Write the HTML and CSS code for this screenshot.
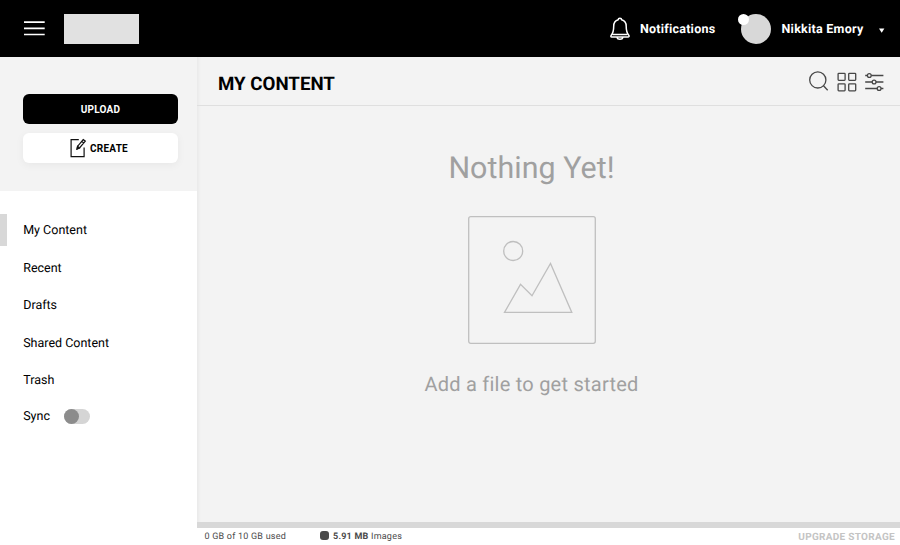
FILE: index.html
```html
<!DOCTYPE html>
<html lang="en">
<head>
<meta charset="utf-8">
<title>My Content</title>
<link rel="stylesheet" href="styles.css">
</head>
<body>
<div class="app">
  <header class="topbar">
    <svg class="menu-icon" width="21" height="16" viewBox="0 0 21 16" fill="none" stroke="#fff" stroke-width="1.7"><path d="M0 2.1H20.7M0 8.4H20.7M0 14.5H20.7"/></svg>
    <div class="logo"></div>
    <svg class="bell" width="20" height="24" viewBox="0 0 20 24" fill="none" stroke="#fff" stroke-width="1.5" stroke-linejoin="round"><path d="M8.2 2.8C8.2 .7 11.6 .7 11.6 2.8C14.8 3.6 16.2 6.1 16.2 9.3C16.2 14.8 16.8 16 18.6 18C19.5 19.1 19.2 20 18.2 20H1.7C.7 20 .5 19.1 1.4 18C3.1 16 3.7 14.8 3.7 9.3C3.7 6.1 5 3.6 8.2 2.8ZM2.6 17.4H17.3M7 20.4C7.6 23 12.3 23 12.9 20.4"/></svg>
    <span class="notifications">Notifications</span>
    <div class="avatar"><i class="badge"></i></div>
    <span class="user">Nikkita Emory</span>
    <svg class="caret" width="6" height="5" viewBox="0 0 6 5"><path d="M0 .5H5.4L2.7 4.7Z" fill="#fff"/></svg>
  </header>
  <div class="body">
    <aside class="sidebar">
      <div class="actions">
        <button class="btn upload">UPLOAD</button>
        <button class="btn create">
          <svg width="17" height="20" viewBox="0 0 17 20" fill="none" stroke="#111" stroke-width="1.2"><path d="M8.8 1.6H1.1V18.6H14.1V9.5"/><path d="M13.2 1.6L15.3 3.1L9.5 10L7 11.1L7.5 8.4ZM11.8 3.4L13.8 5"/><path d="M7.1 11L7.6 8.3L9.5 9.9Z" fill="#111"/></svg>
          <span>CREATE</span>
        </button>
      </div>
      <nav class="nav">
        <a class="item active">My Content</a>
        <a class="item">Recent</a>
        <a class="item">Drafts</a>
        <a class="item">Shared Content</a>
        <a class="item">Trash</a>
        <a class="item sync">Sync<span class="toggle"><i class="knob"></i></span></a>
      </nav>
    </aside>
    <main class="main">
      <div class="head">
        <h1>MY CONTENT</h1>
        <svg width="76" height="24" viewBox="0 0 76 24" fill="none" stroke="#474747" stroke-width="1.3"><circle cx="8.8" cy="10.9" r="8.1"/><path d="M14.5 16.8L18.7 21.2"/><rect x="29.1" y="4.3" width="7" height="7" rx=".7"/><rect x="39.7" y="4.3" width="7" height="7" rx=".7"/><rect x="29.1" y="14.8" width="7" height="7" rx=".7"/><rect x="39.7" y="14.8" width="7" height="7" rx=".7"/><path d="M56.2 6.5H58.4M62.2 6.5H74.4M56.2 13H63.2M67 13H74.4M56.2 19.5H68.2M72 19.5H74.4"/><circle cx="60.3" cy="6.5" r="1.9"/><circle cx="65.1" cy="13" r="1.9"/><circle cx="70.1" cy="19.5" r="1.9"/></svg>
      </div>
      <section class="empty">
        <h2>Nothing Yet!</h2>
        <svg width="128" height="128" viewBox="0 0 128 128" fill="none" stroke="#bfbfbf" stroke-width="1.3"><rect x=".7" y=".7" width="126.6" height="126.6" rx="2"/><circle cx="45.2" cy="35" r="9.5"/><path d="M36.5 96.4L52.5 68.4L64 79.8L82.5 47.5L103.8 96.4Z"/></svg>
        <p>Add a file to get started</p>
      </section>
      <footer class="footer">
        <span class="used">0 GB of 10 GB used</span>
        <i class="swatch"></i>
        <span class="images"><b>5.91 MB</b> Images</span>
        <a class="upgrade">UPGRADE STORAGE</a>
      </footer>
    </main>
  </div>
</div>
</body>
</html>
```
FILE: styles.css
```css
* { box-sizing: border-box; }
body { margin: 0; font-family: Roboto, sans-serif; color: #000; text-rendering: geometricPrecision; }
.app { display: flex; flex-direction: column; width: 900px; height: 545px; overflow: hidden; background: #fff; }
.topbar { display: flex; align-items: center; height: 57px; padding: 0 15px 0 24px; background: #000; color: #fff; font-size: 12.5px; font-weight: 700; white-space: nowrap; }
.menu-icon { margin-bottom: 1px; }
.logo { width: 75px; height: 30px; margin-left: 19px; background: #e1e1e1; }
.bell { margin-left: auto; }
.notifications { width: 76px; margin-left: 10px; padding-top: 2px; letter-spacing: .22px; }
.avatar { position: relative; width: 30px; height: 30px; margin-left: 25px; border-radius: 50%; background: #d8d8d8; }
.badge { position: absolute; left: -3px; top: 0; width: 11px; height: 11px; border-radius: 50%; background: #fff; }
.user { width: 83px; margin-left: 10.5px; padding-top: 2px; letter-spacing: .25px; }
.caret { margin: 4px 0 0 14.5px; }
.body { display: flex; flex: 1; min-height: 0; }
.sidebar { width: 197px; background: #fff; }
.actions { display: flex; flex-direction: column; gap: 9px; height: 134px; padding: 37px 19px 0 23px; background: #f3f3f3; }
.btn { display: flex; align-items: center; justify-content: center; height: 30px; padding: 0; border: 0; border-radius: 6px; font: 700 10px Roboto, sans-serif; letter-spacing: .25px; }
.upload { background: #000; color: #fff; }
.create { gap: 3px; padding-right: 3px; background: #fff; color: #000; box-shadow: 0 2px 8px rgba(0, 0, 0, .05); }
.nav { padding-top: 20px; font-size: 12.5px; }
.item { display: flex; align-items: center; height: 37.5px; padding-top: 2px; padding-left: 23.2px; }
.active { height: 31.5px; margin: 3px 0; padding-left: 16.2px; border-left: 7px solid #d8d8d8; }
.sync { margin-top: -1px; padding-top: 0; }
.toggle { width: 26px; height: 15px; margin-left: 14px; border-radius: 8px; background: #d5d5d5; }
.knob { display: block; width: 15px; height: 15px; border-radius: 50%; background: #8c8c8c; }
.main { display: flex; flex: 1; flex-direction: column; background: #f3f3f3; box-shadow: inset 4px 0 4px -3px rgba(0, 0, 0, .06); }
.head { display: flex; align-items: center; justify-content: space-between; height: 49px; padding: 0 15px 0 21px; border-bottom: 1px solid #dfdfdf; }
h1 { margin: 5px 0 0; font-size: 18.7px; line-height: 22px; font-weight: 700; }
.empty { display: flex; flex: 1; flex-direction: column; align-items: center; padding-left: 14px; padding-right: 48px; color: #a0a0a0; }
h2 { margin: 45px 0 0; font-size: 30.4px; line-height: 36px; font-weight: 400; letter-spacing: .05px; }
.empty svg { margin-top: 29px; }
.empty p { margin: 28px 0 0; font-size: 20px; line-height: 24px; letter-spacing: .24px; }
.footer { display: flex; align-items: center; height: 23px; padding: 0 5px 1px 7.5px; border-top: 6px solid #d8d8d8; background: #fff; color: #4b4b4b; font-size: 9px; letter-spacing: .22px; white-space: nowrap; }
.used { width: 115.5px; padding-top: 1px; }
.swatch { width: 9px; height: 9px; margin-bottom: 1px; border-radius: 3px; background: #4b4b4b; }
.images { margin-left: 4px; padding-top: 1px; }
.upgrade { margin-left: auto; padding-top: 2px; color: #c4c4c4; font-size: 10px; font-weight: 700; letter-spacing: .3px; }
```
